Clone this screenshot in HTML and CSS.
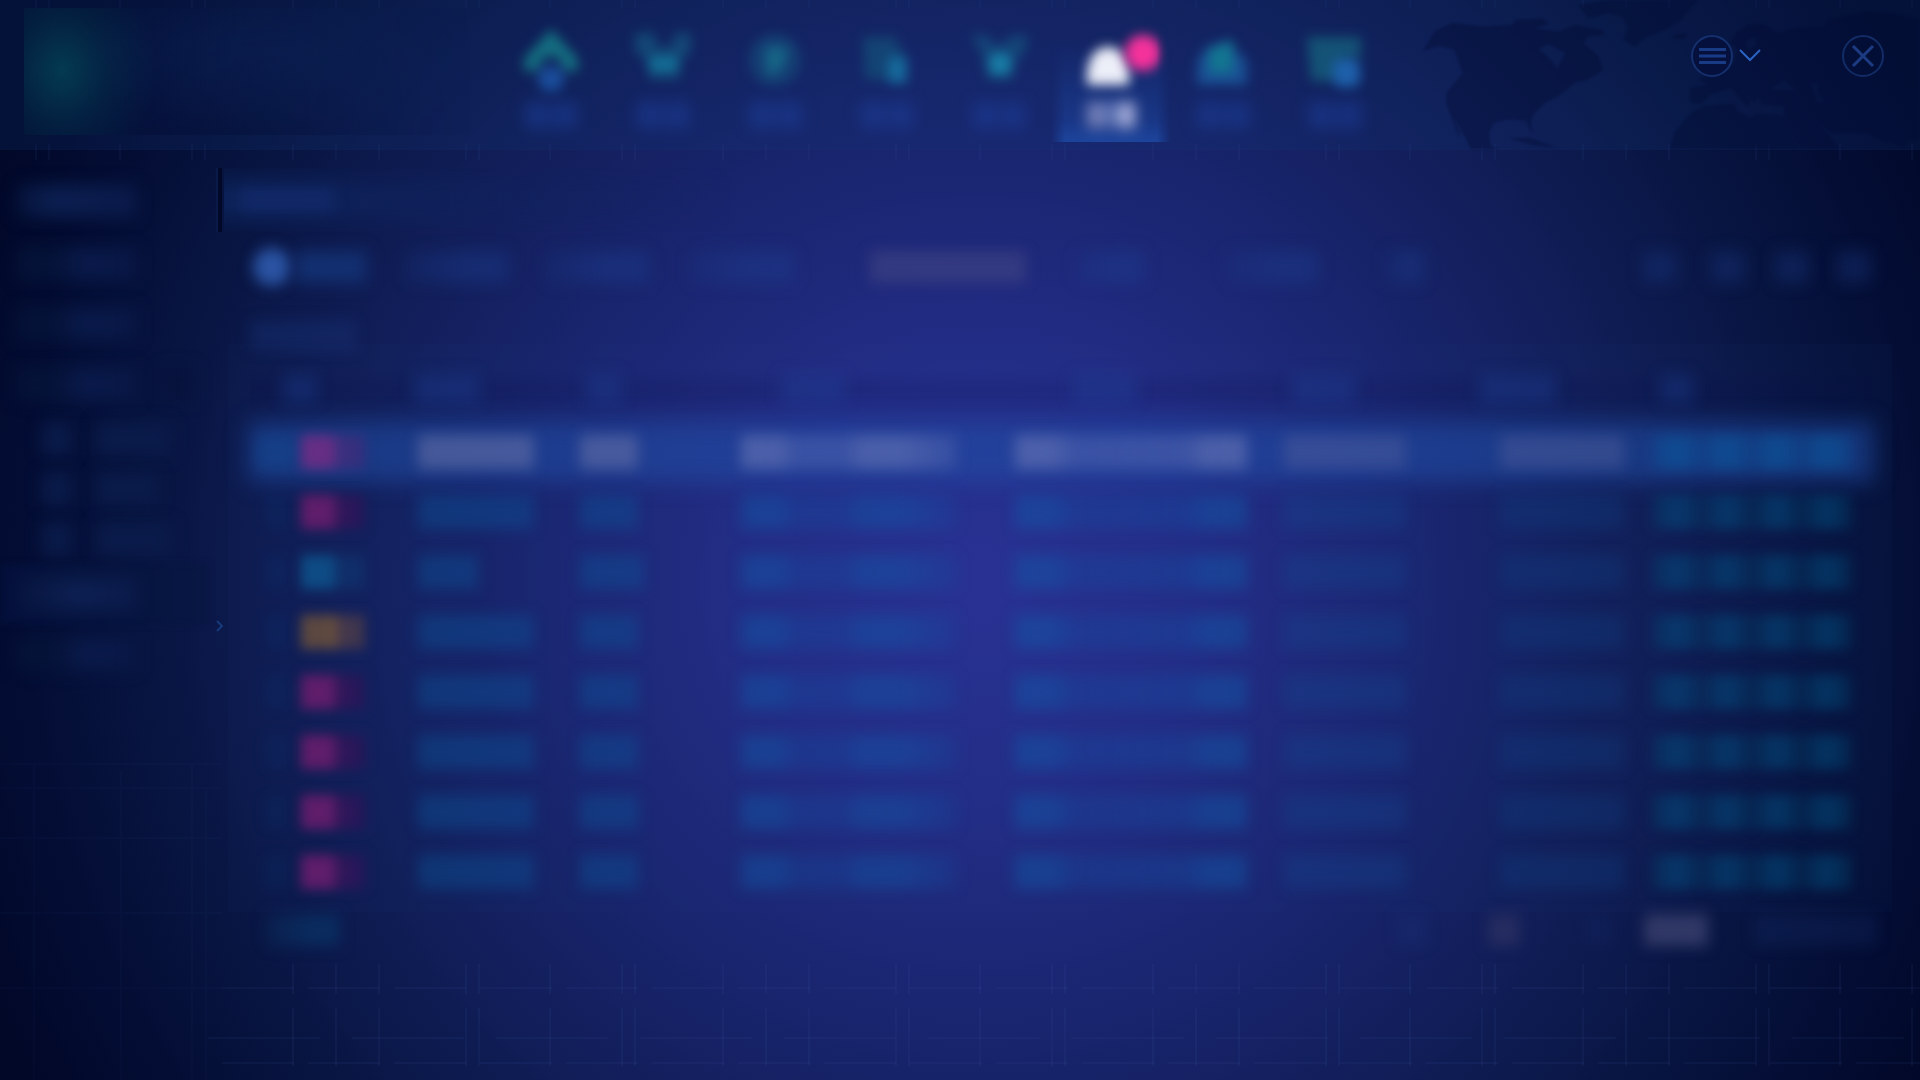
FILE: index.html
```html
<!DOCTYPE html>
<html lang="zh">
<head>
<meta charset="utf-8">
<title>Console</title>
<link rel="stylesheet" href="styles.css">
</head>
<body>
<svg class="lines" aria-hidden="true">
  <defs>
    <pattern id="cols" x="292" y="0" width="430" height="1080" patternUnits="userSpaceOnUse">
      <path d="M1 0V2000M44 0V2000M87 0V2000M174 0V2000M187 0V2000M258 0V2000M330 0V2000M343 0V2000" stroke="#4a68b8" stroke-width="2" stroke-dasharray="58 14" fill="none"/>
    </pattern>
  </defs>
  <rect class="tick" width="100%" height="8" fill="url(#cols)"/>
  <rect class="tick" y="143" width="100%" height="17" fill="url(#cols)"/>
  <rect class="grid-low" x="222" y="964" width="100%" height="100%" fill="url(#cols)"/>
  <path class="grid-low" d="M222 988H4000M222 1063H4000" stroke="#4a68b8" stroke-width="2" stroke-dasharray="72 14"/>
  <path class="grid-low" d="M208 1038H4000" stroke="#4a68b8" stroke-width="2" stroke-dasharray="112 32"/>
  <path class="grid-side" d="M0 764H222M0 788H222M0 838H222M0 913H222M0 988H222M34 764V1080M121 770V1080M192 764V1080M206 790V1080" stroke="#4a68b8" stroke-width="2" fill="none"/>
</svg>

<header class="top">
  <svg class="map" viewBox="0 0 1560 450" aria-hidden="true">
    <path d="M60 155L95 95L150 68L240 80L330 75L340 60L420 55L440 72L400 85L470 95L520 75L600 90L610 105L560 110L545 130L590 170L605 210L560 240L520 250L470 290L430 310L395 345L385 370L392 405L370 365L320 360L275 370L260 400L265 440L290 450H205L185 410L150 350L175 412L165 405L130 310L132 280L165 240L180 220L155 150L110 138ZM410 148L440 133L490 160L466 205L446 180Z" fill-rule="evenodd"/>
    <path d="M530 15L620 0H890L840 60L790 90L735 112L700 140L665 120L680 80L660 50L625 40L560 55ZM815 105L860 102L850 118L820 118ZM320 418L380 415L460 445L400 440Z"/>
    <path d="M870 310L865 265L920 255L890 240L960 215L1000 190L1010 150L985 130L1010 95L1040 75L1090 72L1130 100L1180 85L1270 80L1280 60L1400 34L1480 40L1560 60V425L1530 425L1510 445L1450 425L1400 402L1290 400L1250 365L1320 450H1200L1155 380L1150 320L1080 315L1078 290L1060 310L1005 245L1050 305L1040 320L990 265L930 285L900 315ZM1110 270L1150 240L1190 275ZM1228 250L1260 255L1250 275L1275 308L1252 308ZM1035 125L1065 110L1065 140L1040 150Z" fill-rule="evenodd"/>
    <path d="M805 450L820 400L870 340L910 320L1000 312L1010 335L1050 355L1070 343L1150 350L1158 385L1195 450Z"/>
  </svg>
  <div class="brand"><span class="brand-name"></span></div>
  <nav class="modules" aria-label="Modules">
    <button aria-label="Home"><svg viewBox="0 0 60 60"><path d="M30 0L57 30V42H43Q40 27 30 27T17 42H3V30Z" fill="#15808a"/><circle cx="30" cy="50" r="13" fill="#1d57aa"/></svg><i></i></button>
    <button aria-label="Devices"><svg viewBox="0 0 60 60"><path d="M2 4H22L24 18H38L42 4H58V24L48 30L46 50H16L14 30L2 24Z" fill="#14507c"/><rect x="16" y="28" width="29" height="14" fill="#1383a6"/></svg><i></i></button>
    <button aria-label="Policy"><svg viewBox="0 0 60 60"><circle cx="30" cy="31" r="26" fill="#144477"/><path d="M20 18H43L38 40L22 48Z" fill="#17758f"/></svg><i></i></button>
    <button aria-label="Documents"><svg viewBox="0 0 60 60"><path d="M6 8H38L46 24V50H8Z" fill="#134b78"/><rect x="31" y="28" width="19" height="26" fill="#167aa8"/></svg><i></i></button>
    <button aria-label="Tools"><svg viewBox="0 0 60 60"><path d="M2 6H18L28 18L44 6H58V20L46 34L44 50L18 50L14 28Z" fill="#144c7c"/><rect x="20" y="24" width="22" height="22" rx="8" fill="#1992b4"/></svg><i></i></button>
    <button class="current" aria-label="Alerts"><svg viewBox="0 0 60 60"><path d="M6 56V42Q10 18 27 18T48 42V56Z" fill="#eceef8"/></svg><i></i><b></b></button>
    <button aria-label="Reports"><svg viewBox="0 0 60 60"><path d="M4 56V32L14 18L38 10L44 24L54 30V56Z" fill="#1b5aa0"/><path d="M16 44V20L40 12V44Z" fill="#128a9c"/></svg><i></i></button>
    <button aria-label="System"><svg viewBox="0 0 60 60"><path d="M2 8H56V28H38V52H6Z" fill="#155e7c"/><rect x="28" y="30" width="27" height="28" rx="8" fill="#216fbd"/></svg><i></i></button>
  </nav>
  <div class="tools">
    <button class="menu" aria-label="Menu">
      <svg width="72" height="44" viewBox="0 0 72 44" fill="none"><circle cx="22" cy="22" r="20" fill="#06103c" stroke="#14306f" stroke-width="2"/><path d="M9 15.500H36M9 22H36M9 28.500H36" stroke="#193b85" stroke-width="3"/><path d="M50 16L60 26L70 16" stroke="#2a62c4" stroke-width="2"/></svg>
    </button>
    <button class="close" aria-label="Close">
      <svg width="44" height="44" viewBox="0 0 44 44" fill="none"><circle cx="22" cy="22" r="20" stroke="#122c66" stroke-width="2"/><path d="M12 12L32 32M32 12L12 32" stroke="#1b3b82" stroke-width="3"/></svg>
    </button>
  </div>
</header>

<div class="body">
  <aside class="side">
    <a href="#" class="title" aria-label="Overview"><i></i></a>
    <a href="#" aria-label="Events"><i></i></a>
    <a href="#" aria-label="Hosts"><i></i></a>
    <a href="#" class="group" aria-label="Group"><i></i><i class="caret"></i></a>
    <a href="#" class="sub" aria-label="Item one"><i class="dot"></i><i></i></a>
    <a href="#" class="sub short" aria-label="Item two"><i class="dot"></i><i></i></a>
    <a href="#" class="sub" aria-label="Item three"><i class="dot"></i><i></i></a>
    <a href="#" class="on" aria-label="Log"><i></i></a>
    <a href="#" aria-label="Settings"><i></i></a>
  </aside>
  <div class="split"><span></span><svg width="8" height="12" viewBox="0 0 8 12" fill="none" stroke="#173a7a" stroke-width="2"><path d="M1 1L6 6L1 11"/></svg></div>

  <main class="main">
    <div class="heading"><i></i></div>
    <div class="filters">
      <div class="pick"><input type="radio" checked aria-label="All"><i></i></div>
      <i class="w-l"></i><i class="w-l"></i><i class="w-l"></i>
      <i class="w-date"></i>
      <i class="w-s"></i><i class="w-m"></i><i class="w-xs"></i>
      <button aria-label="Refresh"></button><button aria-label="Export"></button><button aria-label="Columns"></button><button aria-label="More"></button>
    </div>
    <div class="caption"><i></i></div>
    <section class="panel">
      <table>
        <colgroup><col class="c1"><col class="c2"><col class="c3"><col class="c4"><col class="c5"><col class="c6"><col class="c7"><col class="c8"><col class="c9"></colgroup>
        <thead><tr><th></th><th></th><th></th><th></th><th></th><th></th><th></th><th></th><th></th></tr></thead>
        <tbody>
          <tr class="selected"><td></td><td></td><td></td><td></td><td></td><td></td><td></td><td></td><td><button aria-label="View"></button><button aria-label="Edit"></button><button aria-label="Mark"></button><button aria-label="Delete"></button></td></tr>
          <tr><td></td><td></td><td></td><td></td><td></td><td></td><td></td><td></td><td><button aria-label="View"></button><button aria-label="Edit"></button><button aria-label="Mark"></button><button aria-label="Delete"></button></td></tr>
          <tr class="low"><td></td><td></td><td></td><td></td><td></td><td></td><td></td><td></td><td><button aria-label="View"></button><button aria-label="Edit"></button><button aria-label="Mark"></button><button aria-label="Delete"></button></td></tr>
          <tr class="mid"><td></td><td></td><td></td><td></td><td></td><td></td><td></td><td></td><td><button aria-label="View"></button><button aria-label="Edit"></button><button aria-label="Mark"></button><button aria-label="Delete"></button></td></tr>
          <tr><td></td><td></td><td></td><td></td><td></td><td></td><td></td><td></td><td><button aria-label="View"></button><button aria-label="Edit"></button><button aria-label="Mark"></button><button aria-label="Delete"></button></td></tr>
          <tr><td></td><td></td><td></td><td></td><td></td><td></td><td></td><td></td><td><button aria-label="View"></button><button aria-label="Edit"></button><button aria-label="Mark"></button><button aria-label="Delete"></button></td></tr>
          <tr><td></td><td></td><td></td><td></td><td></td><td></td><td></td><td></td><td><button aria-label="View"></button><button aria-label="Edit"></button><button aria-label="Mark"></button><button aria-label="Delete"></button></td></tr>
          <tr><td></td><td></td><td></td><td></td><td></td><td></td><td></td><td></td><td><button aria-label="View"></button><button aria-label="Edit"></button><button aria-label="Mark"></button><button aria-label="Delete"></button></td></tr>
        </tbody>
      </table>
    </section>
    <footer class="pager">
      <i class="total"></i>
      <button class="prev" aria-label="Previous"></button>
      <button class="page" aria-label="Page"></button>
      <button class="next" aria-label="Next"></button>
      <button class="size" aria-label="Page size"></button>
      <i class="jump"></i>
    </footer>
  </main>
</div>
</body>
</html>
```
FILE: styles.css
```css
* { box-sizing: border-box; }

body {
  margin: 0;
  min-height: 100vh;
  position: relative;
  display: flex;
  flex-direction: column;
  overflow-x: hidden;
  font-family: "Noto Sans", "Noto Sans CJK SC", sans-serif;
  background: radial-gradient(ellipse 56% 96% at 51% 54%, #2a3194 0%, #242d88 20%, #19256e 43%, #101d56 62%, #07143f 79%, #030c32 91%, #010828 100%);
}

button { margin: 0; padding: 0; border: 0; background: none; display: block; }
i { display: block; }

.lines { position: absolute; inset: 0; width: 100%; height: 100%; pointer-events: none; }
.tick { opacity: .07; }
.grid-low { opacity: .08; }
.grid-side { opacity: .04; }

/* top bar */
.top {
  position: relative;
  height: 150px;
  display: grid;
  grid-template-columns: 495fr 896fr 529fr;
  background: rgba(18, 56, 118, .2);
  border-bottom: 1px solid rgba(40, 80, 160, .04);
}
.map { position: absolute; right: 0; top: 0; height: 149px; fill: #020a32; opacity: .38; filter: blur(1px); }

.brand {
  position: relative;
  margin: 8px 0 14px 24px;
  display: flex;
  background: radial-gradient(ellipse 95px 110px at 38px 62px, rgba(4, 86, 98, .6), rgba(4, 60, 80, .34) 50%, transparent 100%), linear-gradient(170deg, transparent 30%, rgba(2, 8, 45, .35) 80%);
  mask-image: linear-gradient(90deg, #000 30%, transparent 95%);
}
.brand-name { flex: 1; background: radial-gradient(ellipse 50% 60% at 60% 36%, rgba(16, 50, 110, .3), transparent); }

.modules { position: relative; display: grid; grid-template-columns: repeat(8, 1fr); }
.modules button { position: relative; display: flex; flex-direction: column; align-items: center; padding-top: 29px; height: 142px; }
.modules svg { width: 60px; height: 60px; filter: blur(6px); opacity: .8; overflow: visible; }
.modules i { width: 52px; height: 26px; margin-top: 13px; background: linear-gradient(90deg, #1d41a0 35%, #183284 50%, #1d41a0 70%); filter: blur(8px); opacity: .5; }
.modules .current { margin: 0 -4px; background: linear-gradient(transparent 30%, rgba(28, 70, 160, .5) 85%, #1d459c); mask-image: linear-gradient(90deg, transparent, #000 12%, #000 88%, transparent); }
.modules .current svg { opacity: 1; filter: blur(6px); }
.modules .current i { width: 48px; background: linear-gradient(90deg, #7480b8 30%, #4560a8 48%, #aab0da 80%); filter: blur(7px); opacity: 1; }
.modules b { position: absolute; left: 74px; top: 35px; width: 36px; height: 36px; border-radius: 50%; background: #f5329c; filter: blur(6px); }

.tools { position: relative; display: flex; align-items: flex-start; justify-content: flex-end; gap: 79px; padding: 34px 35px 0 0; }
.tools svg { display: block; }

/* navigation */
.body { position: relative; flex: 1; display: flex; }
.side { width: 216px; flex: none; padding-top: 18px; }
.side a { display: flex; align-items: center; height: 60px; padding-left: 18px; }
.side i { width: 118px; height: 32px; filter: blur(8px); background: linear-gradient(90deg, #051338 30%, #091a4a 55%, #091847 90%); }
.side .title { height: 66px; }
.side .title i { background: linear-gradient(90deg, #06143c, #0b1f50 30%, #0a1a4a); }
.side .group { gap: 26px; }
.side .group .caret { width: 32px; background: #07133c; }
.side .sub { height: 50px; padding-left: 43px; gap: 26px; }
.side .sub i { width: 74px; background: #0a1b4a; }
.side .sub.short i { width: 60px; }
.side .sub .dot, .side .sub.short .dot { width: 28px; }
.side .on { margin-right: 8px; background: linear-gradient(90deg, #04103a, #081743); filter: blur(3px); }
.side .on i { background: linear-gradient(90deg, #07153f, #0d2052 50%, #0b1b4b); }

.split { width: 8px; display: flex; flex-direction: column; gap: 388px; padding-top: 18px; }
.split span { height: 64px; width: 6px; background: #020828; border-left: 2px solid #0a1a48; }

/* content */
.main { flex: 1; min-width: 0; padding-top: 18px; }
.heading { height: 64px; padding: 16px 0 0 16px; background: linear-gradient(90deg, rgba(18, 48, 112, .5), rgba(14, 38, 95, .3) 14%, transparent 30%); mask-image: linear-gradient(rgba(0, 0, 0, .2), #000 40%, #000 60%, rgba(0, 0, 0, .1)); }
.heading i { width: 94px; height: 32px; background: #112866; filter: blur(7px); }

.filters {
  display: grid;
  grid-template-columns: 155fr 140fr 145fr 180fr 205fr 150fr 160fr 257fr 68fr 64fr 62fr 38fr;
  align-items: center;
  height: 70px;
  padding: 0 45px 0 26px;
}
.filters i, .filters button { height: 32px; filter: blur(8px); background: linear-gradient(90deg, rgba(28, 66, 148, .14), rgba(28, 66, 148, .36) 60%, rgba(28, 66, 148, .34)); }
.filters .pick { display: flex; align-items: center; gap: 4px; padding-left: 3px; }
.pick i { width: 72px; background: #132f70; }
.pick input { appearance: none; margin: 0; width: 38px; height: 38px; border-radius: 50%; background: #2a53a2; filter: blur(7px); }
.w-l { width: 104px; }
.filters .w-date { width: 156px; background: rgba(84, 84, 138, .38); filter: blur(7px); }
.w-s { width: 68px; }
.w-m { width: 92px; }
.w-xs { width: 38px; }
.filters button { width: 34px; background: rgba(26, 60, 136, .34); }

.caption { height: 42px; padding: 18px 0 0 26px; }
.caption i { width: 106px; height: 30px; background: rgba(28, 62, 138, .28); filter: blur(7px); }

.panel { margin: 0 28px 0 4px; padding: 12px 20px 10px 22px; background: rgba(30, 64, 130, .06); }
table { width: 100%; border-collapse: collapse; table-layout: fixed; }
.c1 { width: 2.8%; } .c2 { width: 7.4%; } .c3 { width: 9.9%; } .c4 { width: 10.2%; } .c5 { width: 16.6%; }
.c6 { width: 16.6%; } .c7 { width: 13.3%; } .c8 { width: 9.5%; } .c9 { width: 13.7%; }
th, td { padding: 0; vertical-align: middle; }
thead tr { height: 66px; background: linear-gradient(transparent 20%, rgba(6, 8, 66, .14) 50%, transparent 90%); }
tbody tr { height: 60px; }

th::before { content: ""; display: block; height: 28px; width: 64px; background: rgba(30, 72, 158, .32); filter: blur(8px); }
th:nth-child(1)::before { display: none; }
th:nth-child(2)::before { width: 34px; margin-left: -12px; }
th:nth-child(4)::before { width: 36px; margin-left: 10px; }
th:nth-child(5)::before { margin-left: 40px; }
th:nth-child(6)::before { margin-left: 62px; }
th:nth-child(7)::before { margin-left: 12px; }
th:nth-child(8)::before { width: 76px; margin-left: -16px; }
th:nth-child(9)::before { width: 34px; margin-left: 10px; }

td::before { content: ""; display: block; height: 34px; filter: blur(7px); background: rgba(10, 88, 156, .38); }
td:nth-child(1)::before { width: 24px; margin-left: 14px; opacity: .25; }
td:nth-child(2)::before { width: 64px; margin-left: 6px; filter: blur(6px); background: linear-gradient(90deg, #5f1d6a 50%, #32175a 56%, #241759); }
td:nth-child(3)::before { width: 116px; margin-left: 3px; }
td:nth-child(4)::before { width: 58px; margin-left: 4px; }
td:nth-child(5)::before { width: 216px; background: linear-gradient(90deg, rgba(16, 92, 170, .4) 18%, rgba(20, 76, 160, .3) 25%, rgba(20, 76, 160, .3) 48%, rgba(16, 92, 170, .38) 55%, rgba(16, 92, 170, .38) 74%, rgba(20, 76, 160, .2)); }
td:nth-child(6)::before { width: 232px; margin-left: 4px; background: linear-gradient(90deg, rgba(16, 92, 170, .42) 16%, rgba(20, 76, 160, .3) 26%, rgba(20, 76, 160, .36) 74%, rgba(16, 92, 170, .42) 82%); }
td:nth-child(7)::before { width: 122px; margin-left: 4px; background: rgba(20, 72, 144, .32); }
td:nth-child(8)::before { width: 124px; margin-left: 4px; background: rgba(14, 62, 125, .34); }
td:nth-child(9)::before { display: none; }
td:nth-child(9) { padding-left: 2px; }
td button { float: left; width: 50px; height: 34px; filter: blur(6px); background: linear-gradient(90deg, rgba(0, 78, 110, .24), rgba(0, 86, 134, .44) 40%, rgba(0, 86, 134, .44) 60%, rgba(0, 78, 110, .24)); }

.low td:nth-child(2)::before { background: linear-gradient(90deg, #0e4b84 50%, #102e69 56%); }
.low td:nth-child(3)::before { width: 60px; }
.low td:nth-child(4)::before { width: 64px; }
.mid td:nth-child(2)::before { background: linear-gradient(90deg, #5c4840 40%, #6a4e3c 52%, #44384c 60%, #3e344e); }

.selected { position: relative; z-index: 0; }
.selected td:first-child::after { content: ""; position: absolute; z-index: -1; inset: 0 -2px; background: rgba(32, 78, 168, .55); filter: blur(11px); }
.selected td:nth-child(1)::before { width: 40px; margin-left: 6px; opacity: .6; }
.selected td:nth-child(2)::before { background: linear-gradient(90deg, #662e84 50%, #3c2f7e 55%, #332f7c); }
.selected td:nth-child(3)::before, .selected td:nth-child(4)::before { background: rgba(120, 124, 172, .46); }
.selected td:nth-child(5)::before { background: linear-gradient(90deg, rgba(126, 134, 190, .46) 18%, rgba(104, 116, 184, .34) 25%, rgba(104, 116, 184, .34) 48%, rgba(126, 134, 190, .44) 56%, rgba(126, 134, 190, .44) 74%, rgba(104, 116, 184, .26)); }
.selected td:nth-child(6)::before { background: linear-gradient(90deg, rgba(126, 134, 190, .46) 16%, rgba(104, 116, 184, .34) 26%, rgba(104, 116, 184, .38) 74%, rgba(126, 134, 190, .46) 82%); }
.selected td:nth-child(7)::before, .selected td:nth-child(8)::before { background: rgba(104, 110, 162, .32); }
.selected button { background: linear-gradient(90deg, rgba(10, 80, 150, .34), rgba(10, 88, 156, .56) 40%, rgba(10, 88, 156, .56) 60%, rgba(10, 80, 150, .34)); }

.pager { display: flex; align-items: center; height: 36px; padding: 0 42px 0 42px; }
.pager i, .pager button { height: 32px; filter: blur(7px); background: rgba(28, 60, 132, .18); }
.pager .total { width: 74px; margin-right: auto; background: linear-gradient(90deg, rgba(10, 44, 86, .4), #0a2b5e 60%); }
.pager .prev { width: 32px; margin-right: 60px; }
.pager .page { width: 32px; margin-right: 66px; background: #252c60; }
.pager .next { width: 26px; margin-right: 32px; opacity: .6; }
.pager .size { width: 64px; margin-right: 46px; background: #303866; }
.pager .jump { width: 124px; }
```
